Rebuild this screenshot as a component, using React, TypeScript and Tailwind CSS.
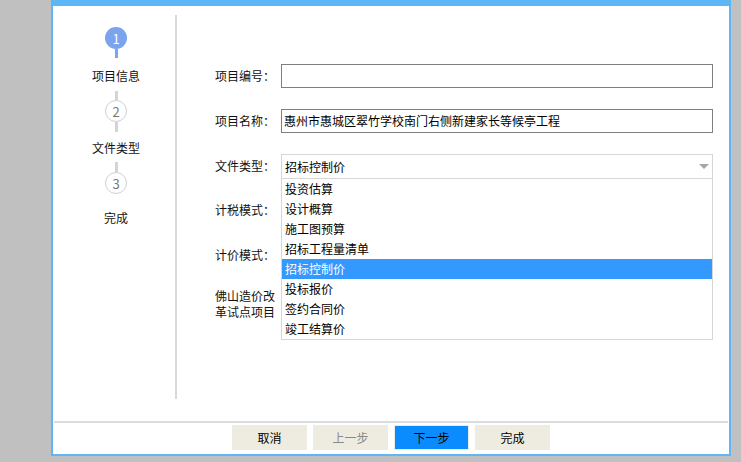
import React from "react";

const items = ["投资估算", "设计概算", "施工图预算", "招标工程量清单", "招标控制价", "投标报价", "签约合同价", "竣工结算价"];

function Connector({ active, h = 10 }: { active?: boolean; h?: number }) {
  return (
    <div
      className={active ? "w-[3px] bg-[#7ba3ee]" : "w-[3px] bg-[#d4d4d4]"}
      style={{ height: h }}
    />
  );
}

export default function App() {
  return (
    <div
      className="w-[741px] h-[462px] bg-[#c0c0c0] overflow-hidden text-[12px] text-[#111]"
      style={{ fontFamily: '"Noto Sans CJK SC", "Noto Sans", sans-serif' }}
    >
      <div className="ml-[51px] w-[680px] h-[456px] bg-white border-[#5eb6f7] border-t-[6px] border-x-2 border-b-2 flex flex-col">
        <div className="flex h-[415px]">
          {/* sidebar steps */}
          <div className="w-[122px] pl-[4px] flex flex-col items-center">
            <div className="mt-[21px] w-[22px] h-[22px] rounded-full bg-[#7ba3ee] text-white flex items-center justify-center text-[13px] leading-none">
              1
            </div>
            <Connector active h={9} />
            <div className="mt-[8px] h-[20px] leading-[20px]">项目信息</div>
            <div className="mt-[5px]">
              <Connector h={9} />
            </div>
            <div className="w-[22px] h-[22px] rounded-full bg-white border border-[#d0d0d0] text-[#777] flex items-center justify-center text-[13px] leading-none">
              2
            </div>
            <Connector h={10} />
            <div className="mt-[6px] h-[20px] leading-[20px]">文件类型</div>
            <div className="mt-[4px]">
              <Connector h={10} />
            </div>
            <div className="w-[22px] h-[22px] rounded-full bg-white border border-[#d0d0d0] text-[#777] flex items-center justify-center text-[13px] leading-none">
              3
            </div>
            <div className="mt-[14px] h-[20px] leading-[20px]">完成</div>
          </div>
          {/* divider */}
          <div className="w-[2px] mt-[9px] h-[384px] bg-[#d9d9d9]" />
          {/* form */}
          <div className="pl-[38px] pt-[58px] flex flex-col">
            <div className="flex items-center h-[24px] gap-[6px]">
              <div className="w-[60px]">项目编号：</div>
              <div className="w-[432px] h-[24px] border border-[#7f7f7f]" />
            </div>
            <div className="flex items-center h-[24px] gap-[6px] mt-[21px]">
              <div className="w-[60px]">项目名称：</div>
              <div className="w-[432px] h-[24px] border border-[#7f7f7f] pl-[2px] leading-[22px] text-black">
                惠州市惠城区翠竹学校南门右侧新建家长等候亭工程
              </div>
            </div>
            <div className="flex items-center h-[24px] gap-[6px] mt-[21px]">
              <div className="w-[60px]">文件类型：</div>
              <div className="relative w-[432px] h-[25px]">
                <div className="w-full h-full border border-[#d6d6d6] pl-[3px] leading-[23px] text-black flex items-center justify-between">
                  <span>招标控制价</span>
                  <span className="mr-[3px] w-0 h-0 border-l-[5px] border-r-[5px] border-t-[5px] border-l-transparent border-r-transparent border-t-[#a6a6a6]" />
                </div>
                <div className="absolute left-0 top-[24px] w-[432px] bg-white border border-[#d6d6d6] z-10">
                  {items.map((it) => (
                    <div
                      key={it}
                      className={
                        it === "招标控制价"
                          ? "h-[20px] leading-[20px] pl-[3px] bg-[#3399ff] text-white"
                          : "h-[20px] leading-[20px] pl-[3px] text-black"
                      }
                    >
                      {it}
                    </div>
                  ))}
                </div>
              </div>
            </div>
            <div className="flex items-center h-[24px] gap-[6px] mt-[20px]">
              <div className="w-[60px]">计税模式：</div>
            </div>
            <div className="flex items-center h-[24px] gap-[6px] mt-[21px]">
              <div className="w-[60px]">计价模式：</div>
            </div>
            <div className="flex items-center h-[32px] gap-[6px] mt-[21px]">
              <div className="w-[60px] leading-[16px]">
                <div>佛山造价改</div>
                <div>革试点项目</div>
              </div>
            </div>
          </div>
        </div>
        {/* footer */}
        <div className="h-[33px] border-t-2 border-[#dcdcdc] mx-[1px] pt-[2px] flex justify-center gap-[6px]">
          <button className="w-[75px] h-[25px] bg-[#eeece1] text-black text-[12px]">取消</button>
          <button className="w-[75px] h-[25px] bg-[#eeece1] text-[#8a8a8a] text-[12px]">上一步</button>
          <button className="w-[75px] h-[25px] bg-[#0a8cff] border border-[#eeece1] text-black text-[12px]">下一步</button>
          <button className="w-[75px] h-[25px] bg-[#eeece1] text-black text-[12px]">完成</button>
        </div>
      </div>
    </div>
  );
}
